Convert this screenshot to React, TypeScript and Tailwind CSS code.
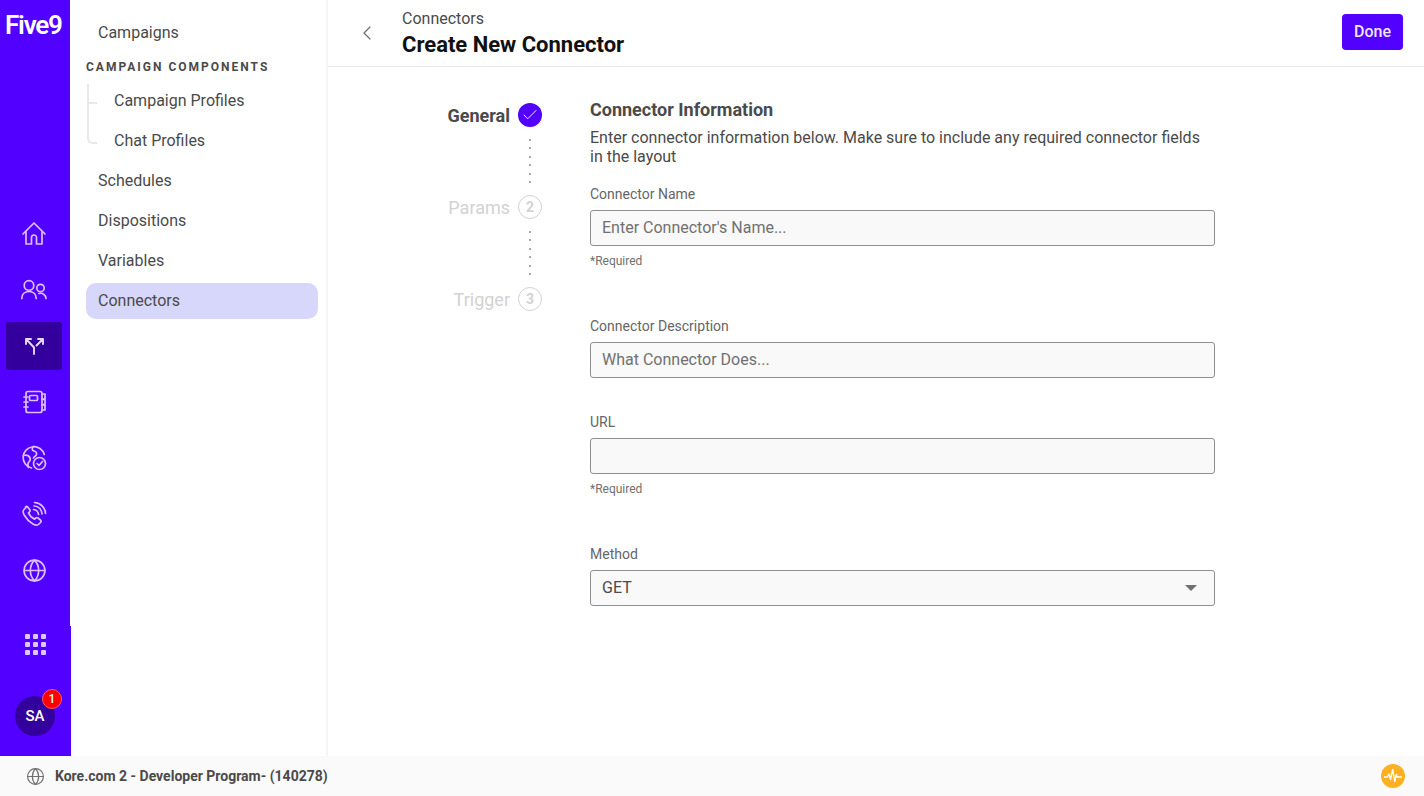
import { ChevronLeft, Globe, Check } from 'lucide-react';

const stroke = {
  fill: 'none',
  stroke: 'currentColor',
  strokeWidth: 1.7,
  strokeLinecap: 'round' as const,
  strokeLinejoin: 'round' as const,
};

function HomeIcon() {
  return (
    <svg width="26" height="26" viewBox="0 0 26 26" {...stroke}>
      <path d="M2 13 13 2l11 11" />
      <path d="M5 10.500V23h5.500v-6.500a2.500 2.500 0 0 1 5 0V23H21V10.500" />
    </svg>
  );
}

function UsersIcon() {
  return (
    <svg width="28" height="28" viewBox="0 0 28 28" {...stroke}>
      <circle cx="9" cy="9.500" r="4.800" />
      <path d="M1.800 22.500c0-4.500 3-7 7.200-7s7.200 2.500 7.200 7" />
      <circle cx="20.500" cy="12" r="3.700" />
      <path d="M18.800 17.500c3.500-1 7 1.200 7.200 5" />
    </svg>
  );
}

function SplitIcon() {
  return (
    <svg width="22" height="22" viewBox="0 0 22 22" {...stroke} strokeWidth={1.9}>
      <path d="M3 4h5M3 4v5M3 4l8 8.500V19" />
      <path d="M20 4h-5M20 4v5M20 4l-6.500 6.500" />
    </svg>
  );
}

function NotebookIcon() {
  return (
    <svg width="24" height="26" viewBox="0 0 24 26" {...stroke}>
      <path d="M4 4.500A2 2 0 0 1 6 2.500h12a2 2 0 0 1 2 2v17a2 2 0 0 1-2 2H6a2 2 0 0 1-2-2z" />
      <rect x="7.500" y="6.500" width="8" height="5" rx="1" />
      <path d="M2 8h4M2 13h4M2 18h4" />
      <path d="M20 5h3v5h-3M20 10.500h3v5h-3M20 16h3v5h-3" />
    </svg>
  );
}

function GlobeCheckIcon() {
  return (
    <svg width="26" height="26" viewBox="0 0 26 26" {...stroke}>
      <path d="M10.500 23A10.800 10.800 0 1 1 23.300 9.500" />
      <path d="M2.500 10.500c3-.8 5.500.5 6.500 2.500s-.5 3.500-1.500 4.500-.5 3.500 0 5" />
      <path d="M12.500 1.500c-2 2-1.500 4 .5 4.500s3 1.500 2.500 3.500-2.500 2-3 3.500" />
      <circle cx="18.500" cy="18.500" r="6" />
      <path d="M16 18.500l2 2 3.500-4" />
    </svg>
  );
}

function PhoneWavesIcon() {
  return (
    <svg width="26" height="26" viewBox="0 0 26 26" {...stroke}>
      <path d="M5.500 6 3 8.500c-1.200 1.200-1 3.500.5 6 2 3.500 5 6.500 8.500 8.500 2.500 1.500 4.500 1.500 6 0l1.500-1.500c.8-.8.700-1.800 0-2.500l-2.500-2c-.8-.6-1.700-.6-2.400.1l-1 1c-2.500-1-5-3.500-6.100-6.200l1-1c.7-.7.7-1.600.2-2.400l-2-2.500c-.7-.8-1.700-.8-2.200 0z" />
      <path d="M12.500 8.500c2.700.3 4.700 2.300 5 5" />
      <path d="M13 5c4.500.3 7.700 3.500 8 8" />
      <path d="M13.500 1.500c6 .3 10.700 5 11 11" />
    </svg>
  );
}

function GridIcon() {
  return (
    <div className="grid grid-cols-3 gap-[3px]">
      {[0, 1, 2, 3, 4, 5, 6, 7, 8].map((i) => (
        <div key={i} className="h-[5px] w-[5px] rounded-[1px] bg-[#dcc8ff]" />
      ))}
    </div>
  );
}

function PulseIcon() {
  return (
    <svg width="24" height="24" viewBox="0 0 24 24">
      <circle cx="12" cy="12" r="12" fill="#fdb022" />
      <path
        d="M3 13h3.500l1.500-3 1.500 5.500 2.200-10 2 12 1.600-7 1 2.500H21"
        fill="none"
        stroke="#fff"
        strokeWidth="1.400"
        strokeLinejoin="round"
      />
    </svg>
  );
}

function RailItem({
  children,
  active,
}: {
  children: React.ReactNode;
  active?: boolean;
}) {
  return (
    <div className="flex h-[56px] items-center justify-center pr-[2px]">
      <div
        className={
          active
            ? 'flex h-[48px] w-[56px] items-center justify-center rounded-[3px] bg-[#33009e] text-[#ead9ff]'
            : 'flex h-[48px] w-[56px] items-center justify-center text-[#dcc0ff]'
        }
      >
        {children}
      </div>
    </div>
  );
}

function NavItem({
  label,
  nested,
  active,
}: {
  label: string;
  nested?: boolean;
  active?: boolean;
}) {
  return (
    <div
      className={
        active
          ? 'flex h-[36px] items-center rounded-[10px] bg-[#d7d7fb] pl-[12px] text-[16px] text-[#4a4a4a]'
          : nested
            ? 'flex h-[36px] items-center pl-[28px] text-[16px] text-[#4a4a4a]'
            : 'flex h-[36px] items-center pl-[12px] text-[16px] text-[#4a4a4a]'
      }
    >
      {label}
    </div>
  );
}

function Step({
  label,
  n,
  done,
}: {
  label: string;
  n: number;
  done?: boolean;
}) {
  return (
    <div className="flex h-[24px] items-center justify-end gap-[8px]">
      <span
        className={
          done
            ? 'text-[18px] font-bold text-[#4a4a4a]'
            : 'text-[18px] text-[#d2d2d2]'
        }
      >
        {label}
      </span>
      {done ? (
        <div className="flex h-[24px] w-[24px] items-center justify-center rounded-full bg-[#5200ff] text-white">
          <Check size={18} strokeWidth={1.25} />
        </div>
      ) : (
        <div className="flex h-[24px] w-[24px] items-center justify-center rounded-full border-[1.5px] border-[#d2d2d2] text-[14px] font-bold text-[#d2d2d2]">
          {n}
        </div>
      )}
    </div>
  );
}

function StepDots() {
  return (
    <div className="flex h-[68px] flex-col items-end justify-center gap-[6.500px] pr-[11px]">
      {[0, 1, 2, 3, 4, 5].map((i) => (
        <div key={i} className="h-[2px] w-[2px] bg-[#a8a8a8]" />
      ))}
    </div>
  );
}

function Field({
  label,
  placeholder,
  required,
  className,
}: {
  label: string;
  placeholder?: string;
  required?: boolean;
  className?: string;
}) {
  return (
    <div className={className}>
      <div className="h-[26px] text-[14px] leading-[20px] text-[#666]">{label}</div>
      <div className="flex h-[36px] items-center rounded-[3px] border border-[#8e8e8e] bg-[#f9f9f9] px-[11px] text-[16px] text-[#707070]">
        {placeholder}
      </div>
      {required && (
        <div className="mt-[7px] text-[12px] leading-[16px] text-[#707070]">*Required</div>
      )}
    </div>
  );
}

export default function App() {
  return (
    <div className="flex h-[796px] w-[1424px] flex-col overflow-hidden bg-white font-['Roboto',sans-serif]">
      <div className="flex min-h-0 flex-1">
        {/* Rail */}
        <div className="flex w-[70px] shrink-0 flex-col bg-[#5200ff]">
          <div className="mt-[9px] h-[196px] pl-[5px] text-[26px] leading-[32px] font-semibold tracking-[-1.200px] text-white">
            Five9
          </div>
          <div className="mt-[1px]">
            <RailItem>
              <HomeIcon />
            </RailItem>
            <RailItem>
              <UsersIcon />
            </RailItem>
            <RailItem active>
              <SplitIcon />
            </RailItem>
            <RailItem>
              <NotebookIcon />
            </RailItem>
            <RailItem>
              <GlobeCheckIcon />
            </RailItem>
            <RailItem>
              <PhoneWavesIcon />
            </RailItem>
            <RailItem>
              <Globe size={25} strokeWidth={1.6} />
            </RailItem>
          </div>
          <div className="mt-[28px] flex h-[130px] w-[71px] flex-col items-center bg-[#5200ff] pt-[8px] pr-[1px]">
            <GridIcon />
            <div className="relative mt-[41px] flex h-[40px] w-[40px] items-center justify-center rounded-full bg-[#33009e] text-[15px] font-medium text-white">
              SA
              <div className="absolute -top-[7px] -right-[7px] flex h-[20px] w-[20px] items-center justify-center rounded-full border border-[#ff5a5a] bg-[#ff0000] text-[12px] text-white">
                1
              </div>
            </div>
          </div>
        </div>

        {/* Section nav */}
        <div className="w-[258px] shrink-0 border-r-2 border-[#f6f6f6] pt-[14px] pr-[8px] pl-[16px]">
          <div className="pt-[1px]">
            <NavItem label="Campaigns" />
          </div>
          <div className="h-[32px] pt-[6px] text-[12px] leading-[20px] font-bold tracking-[2px] text-[#4a4a4a]">
            CAMPAIGN COMPONENTS
          </div>
          <div className="relative">
            <div className="absolute top-[1px] left-[1px] h-[60px] w-[10px] rounded-bl-[6px] border-b-2 border-l-2 border-[#e8e8e8]" />
            <div className="absolute top-[19px] left-[3px] h-[2px] w-[8px] bg-[#e8e8e8]" />
            <NavItem label="Campaign Profiles" nested />
            <div className="h-[4px]" />
            <NavItem label="Chat Profiles" nested />
          </div>
          <div className="mt-[4px] flex flex-col gap-[4px]">
            <NavItem label="Schedules" />
            <NavItem label="Dispositions" />
            <NavItem label="Variables" />
            <NavItem label="Connectors" active />
          </div>
        </div>

        {/* Main */}
        <div className="flex min-w-0 flex-1 flex-col">
          <div className="flex h-[67px] shrink-0 items-center border-b border-[#e8e8e8] pr-[21px]">
            <div className="flex w-[74px] justify-center pl-[4px] text-[#707070]">
              <ChevronLeft size={24} strokeWidth={1.25} />
            </div>
            <div className="flex-1 translate-y-[1px]">
              <div className="text-[16px] leading-[22px] text-[#4a4a4a]">Connectors</div>
              <div className="text-[22px] leading-[30px] font-bold text-[#111]">
                Create New Connector
              </div>
            </div>
            <div className="flex h-[36px] w-[61px] -translate-y-[1px] items-center justify-center rounded-[4px] bg-[#5200ff] text-[16px] font-medium text-[#f0e6ff]">
              Done
            </div>
          </div>
          <div className="flex flex-1">
            <div className="mt-[36px] ml-[92px] w-[122px] shrink-0">
              <Step label="General" n={1} done />
              <StepDots />
              <Step label="Params" n={2} />
              <StepDots />
              <Step label="Trigger" n={3} />
            </div>
            <div className="mt-[31px] ml-[48px] w-[625px] shrink-0">
              <div className="text-[18px] leading-[24px] font-bold text-[#4a4a4a]">
                Connector Information
              </div>
              <p className="mt-[6px] w-[620px] text-[16px] leading-[19px] text-[#4a4a4a]">
                Enter connector information below. Make sure to include any required connector fields in the layout
              </p>
              <Field className="mt-[18px]" label="Connector Name" placeholder="Enter Connector's Name..." required />
              <Field className="mt-[47px]" label="Connector Description" placeholder="What Connector Does..." />
              <Field className="mt-[34px]" label="URL" required />
              <div className="mt-[47px]">
                <div className="h-[26px] text-[14px] leading-[20px] text-[#666]">Method</div>
                <div className="flex h-[36px] items-center justify-between rounded-[3px] border border-[#8e8e8e] bg-[#f9f9f9] pr-[17px] pl-[11px] text-[16px] text-[#4a4a4a]">
                  GET
                  <div className="h-0 w-0 border-x-[6px] border-t-[6px] border-x-transparent border-t-[#707070]" />
                </div>
              </div>
            </div>
          </div>
        </div>
      </div>

      {/* Bottom account bar */}
      <div className="flex h-[40px] shrink-0 items-center bg-[#fafafa] pr-[19px] pl-[26px]">
        <Globe size={19} strokeWidth={1.5} className="text-[#707070]" />
        <div className="ml-[10px] flex-1 text-[14px] font-bold text-[#4a4a4a]">
          Kore.com 2 - Developer Program- (140278)
        </div>
        <PulseIcon />
      </div>
    </div>
  );
}
